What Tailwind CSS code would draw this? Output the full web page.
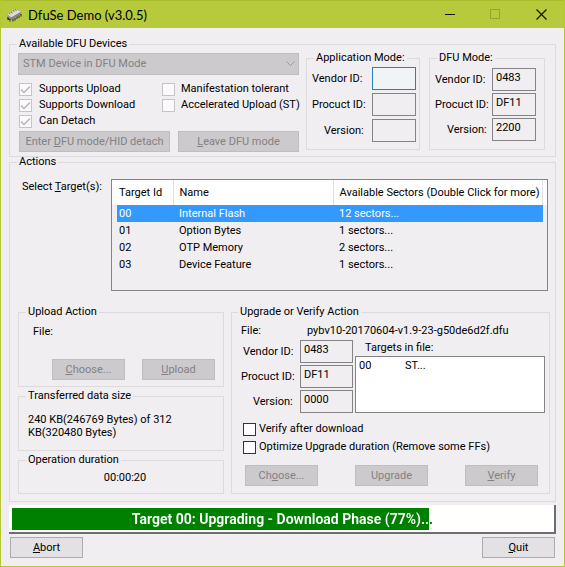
<!DOCTYPE html>
<html lang="en">
<head>
<meta charset="utf-8">
<title>DfuSe Demo (v3.0.5)</title>
<script src="https://cdn.jsdelivr.net/npm/@tailwindcss/browser@4"></script>
</head>
<body class="min-h-screen bg-[#f0eef0]">
<div class="flex min-h-screen flex-col border border-t-0 border-[#b3c92f] bg-[#f0eef0] font-['Roboto','Liberation_Sans',sans-serif] text-[11px] leading-4 text-black">

  <header class="flex h-7 shrink-0 items-center border-t border-[#a9bd2c] bg-[#b6ca3c] pl-[5px]">
    <svg class="h-4 w-4" viewBox="0 0 16 16" aria-hidden="true">
      <path d="M1 8 11 2l4 4-9 6-4 1z" fill="#3c3c3c"/>
      <path d="M1 7.500 10.500 2 15 5 5.500 10.500z" fill="#dcdcdc"/>
      <path d="M1 7.500 5.500 10.500V13L1 10z" fill="#a5a5a5"/>
      <path d="M5.500 10.500 15 5v2.500L5.500 13z" fill="#8a8a8a"/>
      <path d="M2 10v3M4 11.500v3M7 12v2.500M9 11v2.500M11 9.500V12M13 8.500V11M15 7v2.500" stroke="#222" fill="none"/>
      <path d="M3 6l1.500 1M5 5l1.500 1M7 3.500l1.500 1M9 2.500l1.500 1" stroke="#666" fill="none"/>
    </svg>
    <h1 class="ml-[6px] flex-1 font-['Lato','Open_Sans',sans-serif] text-[13px]">DfuSe Demo (v3.0.5)</h1>
    <button type="button" aria-label="Minimize" class="flex h-7 w-[45px] items-center justify-center"><svg class="h-[11px] w-[11px]" viewBox="0 0 11 11"><path d="M0 5.500h10" stroke="#111"/></svg></button>
    <button type="button" aria-label="Maximize" disabled class="flex h-7 w-[45px] items-center justify-center"><svg class="h-[11px] w-[11px]" viewBox="0 0 11 11"><path d="M.5.5h9v9h-9z" fill="none" stroke="#92a42c"/></svg></button>
    <button type="button" aria-label="Close" class="flex h-7 w-[46px] items-center justify-center"><svg class="h-[11px] w-[11px]" viewBox="0 0 11 11"><path d="M.5.5l10 10M10.500.5l-10 10" stroke="#111" stroke-width="1.200"/></svg></button>
  </header>

  <main class="flex flex-col px-2 pt-[11px] pb-2">

    <fieldset class="min-w-0 border border-[#dcdadc] px-2">
      <legend class="-ml-px px-[2px] leading-[10px]">Available DFU Devices</legend>
      <div class="flex pb-1">
        <div class="min-w-0 flex-1 pt-1">
          <div class="relative">
            <select aria-label="DFU device" disabled class="block h-[22px] w-full appearance-none border border-[#bfbdbf] bg-[#cccacc] px-1 text-[#838183] opacity-100">
              <option>STM Device in DFU Mode</option>
            </select>
            <svg class="pointer-events-none absolute top-2 right-1 h-[6px] w-[9px]" viewBox="0 0 9 6"><path d="M.5.5l4 4 4-4" fill="none" stroke="#9d9b9d"/></svg>
          </div>
          <div class="mt-[6px] grid grid-cols-[143px_1fr] pl-px">
            <label class="flex h-4 items-center gap-[7px] whitespace-nowrap"><span class="relative flex"><input type="checkbox" checked disabled class="h-[13px] w-[13px] appearance-none border border-[#c6c4c6] bg-[#fbfafb]"><svg class="absolute inset-0 h-[13px] w-[13px]" viewBox="0 0 13 13"><path d="M2 6.500l3 3 6-6" fill="none" stroke="#b4b2b4" stroke-width="1.400"/></svg></span>Supports Upload</label>
            <label class="flex h-4 items-center gap-[6px] whitespace-nowrap"><input type="checkbox" disabled class="h-[13px] w-[13px] appearance-none border border-[#c6c4c6] bg-[#fbfafb]">Manifestation tolerant</label>
            <label class="flex h-4 items-center gap-[7px] whitespace-nowrap"><span class="relative flex"><input type="checkbox" checked disabled class="h-[13px] w-[13px] appearance-none border border-[#c6c4c6] bg-[#fbfafb]"><svg class="absolute inset-0 h-[13px] w-[13px]" viewBox="0 0 13 13"><path d="M2 6.500l3 3 6-6" fill="none" stroke="#b4b2b4" stroke-width="1.400"/></svg></span>Supports Download</label>
            <label class="flex h-4 items-center gap-[6px] whitespace-nowrap"><input type="checkbox" disabled class="h-[13px] w-[13px] appearance-none border border-[#c6c4c6] bg-[#fbfafb]">Accelerated Upload (ST)</label>
            <label class="flex h-4 items-center gap-[7px] whitespace-nowrap"><span class="relative flex"><input type="checkbox" checked disabled class="h-[13px] w-[13px] appearance-none border border-[#c6c4c6] bg-[#fbfafb]"><svg class="absolute inset-0 h-[13px] w-[13px]" viewBox="0 0 13 13"><path d="M2 6.500l3 3 6-6" fill="none" stroke="#b4b2b4" stroke-width="1.400"/></svg></span>Can Detach</label>
          </div>
          <div class="mt-[2px] flex gap-2 pl-px">
            <button type="button" disabled class="h-[21px] w-[151px] border border-[#bfbdbf] bg-[#cccacc] whitespace-nowrap text-[#838183]">Enter <u>D</u>FU mode/HID detach</button>
            <button type="button" disabled class="h-[21px] flex-1 border border-[#bfbdbf] bg-[#cccacc] text-[#838183]"><u>L</u>eave DFU mode</button>
          </div>
        </div>

        <fieldset class="mt-[4px] ml-[7px] h-[97px] w-[114px] shrink-0 border border-[#dcdadc] pr-[3px] pl-[5px] whitespace-nowrap">
          <legend class="ml-[2px] px-[2px] leading-[10px]">Application Mode:</legend>
          <div class="flex flex-col gap-[3px] pt-1">
            <div class="flex items-center justify-between"><label for="a1">Vendor ID:</label><input id="a1" class="h-[23px] w-11 border border-[#2c80b4] bg-[#f0f4f6] px-[3px]"></div>
            <div class="flex items-center justify-between"><label for="a2">Procuct ID:</label><input id="a2" class="h-[23px] w-11 border border-[#858385] px-[3px]"></div>
            <div class="flex items-center justify-between"><label for="a3" class="pl-3">Version:</label><input id="a3" class="h-[23px] w-11 border border-[#858385] px-[3px]"></div>
          </div>
        </fieldset>
        <fieldset class="mt-[4px] mr-[2px] ml-[9px] h-[97px] w-[116px] shrink-0 border border-[#dcdadc] pr-2 pl-[5px] whitespace-nowrap">
          <legend class="ml-[2px] px-[2px] leading-[10px]">DFU Mode:</legend>
          <div class="flex flex-col gap-[2px] pt-[5px]">
            <div class="flex items-center justify-between"><label for="d1">Vendor ID:</label><input id="d1" value="0483" class="h-[23px] w-11 border border-[#858385] px-[3px] pb-1"></div>
            <div class="flex items-center justify-between"><label for="d2">Procuct ID:</label><input id="d2" value="DF11" class="h-[23px] w-11 border border-[#858385] px-[3px] pb-1"></div>
            <div class="flex items-center justify-between"><label for="d3" class="pl-3">Version:</label><input id="d3" value="2200" class="h-[23px] w-11 border border-[#858385] px-[3px] pb-1"></div>
          </div>
        </fieldset>
      </div>
    </fieldset>

    <fieldset class="min-w-0 border border-[#dcdadc] pr-[5px] pl-2">
      <legend class="-ml-px px-[2px] leading-[10px]">Actions</legend>
      <div class="flex pt-3 pr-[2px]">
        <span id="targets" class="w-[93px] pl-1">Select <u>T</u>arget(s):</span>
        <div class="h-[112px] flex-1 border border-[#858385] bg-linear-to-b from-white from-[25px] to-[#f0eef0] to-[25px] pr-1 pl-[5px]">
          <table aria-labelledby="targets" class="w-full table-fixed border-collapse text-left">
            <colgroup><col class="w-[56px]"><col class="w-[160px]"><col></colgroup>
            <thead>
              <tr class="h-[25px]"><th class="border-r border-[#e2e0e2] px-[2px] font-normal whitespace-nowrap">Target Id</th><th class="border-r border-[#e2e0e2] pl-[6px] font-normal">Name</th><th class="border-r border-[#e2e0e2] pl-[6px] font-normal whitespace-nowrap">Available Sectors (Double Click for more)</th></tr>
            </thead>
            <tbody>
              <tr class="h-[17px] bg-[#3399ff] text-white"><td class="px-[2px]">00</td><td class="pl-[6px]">Internal Flash</td><td class="pl-[6px]">12 sectors...</td></tr>
              <tr class="h-[17px]"><td class="px-[2px]">01</td><td class="pl-[6px]">Option Bytes</td><td class="pl-[6px]">1 sectors...</td></tr>
              <tr class="h-[17px]"><td class="px-[2px]">02</td><td class="pl-[6px]">OTP Memory</td><td class="pl-[6px]">2 sectors...</td></tr>
              <tr class="h-[17px]"><td class="px-[2px]">03</td><td class="pl-[6px]">Device Feature</td><td class="pl-[6px]">1 sectors...</td></tr>
            </tbody>
          </table>
        </div>
      </div>

      <div class="mt-4 flex gap-[7px] pb-[7px]">
        <div class="flex w-[206px] flex-col gap-1">
          <fieldset class="h-[80px] border border-[#dcdadc] px-2">
            <legend class="-ml-px px-[2px] leading-[10px]">Upload Action</legend>
            <div class="pt-[7px] pl-[6px]">File:</div>
            <div class="mt-[19px] flex justify-end gap-[17px]">
              <button type="button" disabled class="h-[21px] w-[73px] border border-[#bfbdbf] bg-[#cccacc] text-[#838183]"><u>C</u>hoose...</button>
              <button type="button" disabled class="h-[21px] w-[73px] border border-[#bfbdbf] bg-[#cccacc] text-[#838183]"><u>U</u>pload</button>
            </div>
          </fieldset>
          <fieldset class="h-[60px] border border-[#dcdadc] px-2">
            <legend class="-ml-px px-[2px] leading-[10px]">Transferred data size</legend>
            <p class="w-[160px] pt-3 pl-px leading-[13px]">240 KB(246769 Bytes) of 312 KB(320480 Bytes)</p>
          </fieldset>
          <fieldset class="h-[39px] border border-[#dcdadc] px-2">
            <legend class="-ml-px px-[2px] leading-[10px]">Operation duration</legend>
            <p class="pt-[5px] pl-2 text-center">00:00:20</p>
          </fieldset>
        </div>

        <fieldset class="min-w-0 flex-1 border border-[#dcdadc] pr-1 pl-[5px]">
          <legend class="ml-px px-[2px] leading-[10px]">Upgrade or Verify Action</legend>
          <div class="flex pt-[6px] pl-1 whitespace-nowrap"><span class="w-[66px]">File:</span><span>pybv10-20170604-v1.9-23-g50de6d2f.dfu</span></div>
          <div class="mt-px flex gap-[2px]">
            <div class="flex w-[116px] flex-col gap-[2px]">
              <div class="flex items-center justify-between"><label for="u1" class="pl-[6px]">Vendor ID:</label><input id="u1" value="0483" class="h-[23px] w-[53px] border border-[#858385] px-[3px] pb-1"></div>
              <div class="flex items-center justify-between"><label for="u2" class="pl-1 whitespace-nowrap">Procuct ID:</label><input id="u2" value="DF11" class="h-[23px] w-[53px] border border-[#858385] px-[3px] pb-1"></div>
              <div class="flex items-center justify-between"><label for="u3" class="pl-4">Version:</label><input id="u3" value="0000" class="h-[23px] w-[53px] border border-[#858385] px-[3px] pb-1"></div>
            </div>
            <div class="flex flex-1 flex-col">
              <span id="infile" class="pl-[10px]">Targets in file:</span>
              <div class="flex-1 border border-[#858385] bg-white">
                <table aria-labelledby="infile" class="border-collapse"><tbody><tr class="h-[17px]"><td class="w-[49px] pl-[3px]">00</td><td>ST...</td></tr></tbody></table>
              </div>
            </div>
          </div>
          <div class="mt-2 flex flex-col gap-[2px] pl-[6px]">
            <label class="flex items-center gap-[3px]"><input type="checkbox" class="h-[13px] w-[13px] appearance-none border border-[#333] bg-white">Verify after download</label>
            <label class="flex items-center gap-[3px] whitespace-nowrap"><input type="checkbox" class="h-[13px] w-[13px] appearance-none border border-[#333] bg-white">Optimize Upgrade duration (Remove some FFs)</label>
          </div>
          <div class="mt-[10px] flex justify-between pr-[7px] pb-[6px] pl-2">
            <button type="button" disabled class="h-[21px] w-[73px] border border-[#bfbdbf] bg-[#cccacc] text-[#838183]">Ch<u>o</u>ose...</button>
            <button type="button" disabled class="h-[21px] w-[73px] border border-[#bfbdbf] bg-[#cccacc] text-[#838183]">Upgrade</button>
            <button type="button" disabled class="h-[21px] w-[73px] border border-[#bfbdbf] bg-[#cccacc] text-[#838183]"><u>V</u>erify</button>
          </div>
        </fieldset>
      </div>
    </fieldset>

    <div role="progressbar" aria-valuenow="77" aria-valuemin="0" aria-valuemax="100" aria-label="Upgrade progress" class="mt-[3px] border-r-2 border-b-2 border-[#6e6c6e] bg-[#fffffd] pt-[3px] pr-px pb-[2px] pl-[3px]">
      <div class="bg-linear-to-r from-[#008000] from-77% to-[#fffffd] to-77%">
        <div class="bg-linear-to-r from-white from-77% to-[#006000] to-77% bg-clip-text text-center text-[14px] leading-[22px] font-bold text-transparent">Target 00: Upgrading - Download Phase (77%)...</div>
      </div>
    </div>

    <div class="mt-[3px] flex justify-between pr-px pl-px">
      <button type="button" class="h-[21px] w-[73px] border border-[#adabad] bg-[#e3e1e3]"><u>A</u>bort</button>
      <button type="button" class="h-[21px] w-[73px] border border-[#adabad] bg-[#e3e1e3]"><u>Q</u>uit</button>
    </div>
  </main>
</div>
</body>
</html>
